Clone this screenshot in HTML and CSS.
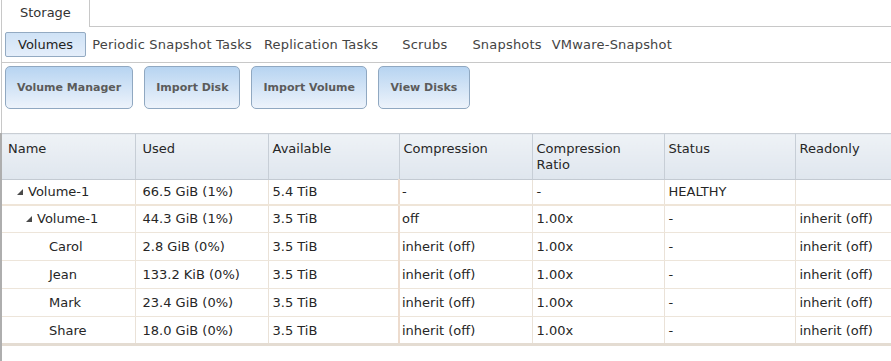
FILE: index.html
```html
<!DOCTYPE html>
<html lang="en">
<head>
  <meta charset="UTF-8" />
  <title>Storage</title>
  <meta name="viewport" content="width=device-width, initial-scale=1.0" />
  <link rel="stylesheet" href="styles.css">
</head>
<body>

  <div class="top">
    <div class="tabstrip">
      <div class="tab">Storage</div>
      <div class="tab-fill"></div>
    </div>

    <nav class="subnav">
      <a href="#" class="active">Volumes</a>
      <a href="#">Periodic Snapshot Tasks</a>
      <a href="#">Replication Tasks</a>
      <a href="#" class="wide">Scrubs</a>
      <a href="#">Snapshots</a>
      <a href="#" class="tight">VMware-Snapshot</a>
    </nav>

    <div class="toolbar">
      <button>Volume Manager</button>
      <button>Import Disk</button>
      <button>Import Volume</button>
      <button>View Disks</button>
    </div>
  </div>

  <div class="grid">
    <table>
      <colgroup>
        <col class="c-name"><col class="c-used"><col class="c-avail"><col class="c-comp">
        <col class="c-ratio"><col class="c-status"><col class="c-ro">
      </colgroup>
      <thead>
        <tr>
          <th>Name</th>
          <th>Used</th>
          <th>Available</th>
          <th>Compression</th>
          <th>Compression Ratio</th>
          <th>Status</th>
          <th>Readonly</th>
        </tr>
      </thead>
      <tbody>
        <tr class="pool">
          <td class="lvl0"><span class="twisty"><svg width="6" height="6" viewBox="0 0 6 6"><polygon points="6,0 6,6 0,6" fill="#4a4a4a"/></svg></span>Volume-1</td>
          <td>66.5 GiB (1%)</td>
          <td>5.4 TiB</td>
          <td class="split">-</td>
          <td>-</td>
          <td>HEALTHY</td>
          <td></td>
        </tr>
        <tr>
          <td class="lvl1"><span class="twisty"><svg width="6" height="6" viewBox="0 0 6 6"><polygon points="6,0 6,6 0,6" fill="#4a4a4a"/></svg></span>Volume-1</td>
          <td>44.3 GiB (1%)</td>
          <td>3.5 TiB</td>
          <td class="split">off</td>
          <td>1.00x</td>
          <td>-</td>
          <td>inherit (off)</td>
        </tr>
        <tr>
          <td class="lvl2">Carol</td>
          <td>2.8 GiB (0%)</td>
          <td>3.5 TiB</td>
          <td class="split">inherit (off)</td>
          <td>1.00x</td>
          <td>-</td>
          <td>inherit (off)</td>
        </tr>
        <tr>
          <td class="lvl2">Jean</td>
          <td>133.2 KiB (0%)</td>
          <td>3.5 TiB</td>
          <td class="split">inherit (off)</td>
          <td>1.00x</td>
          <td>-</td>
          <td>inherit (off)</td>
        </tr>
        <tr>
          <td class="lvl2">Mark</td>
          <td>23.4 GiB (0%)</td>
          <td>3.5 TiB</td>
          <td class="split">inherit (off)</td>
          <td>1.00x</td>
          <td>-</td>
          <td>inherit (off)</td>
        </tr>
        <tr class="last">
          <td class="lvl2">Share</td>
          <td>18.0 GiB (0%)</td>
          <td>3.5 TiB</td>
          <td class="split">inherit (off)</td>
          <td>1.00x</td>
          <td>-</td>
          <td>inherit (off)</td>
        </tr>
      </tbody>
    </table>
  </div>

</body>
</html>
```

FILE: styles.css
```css
:root {
  --font: 'DejaVu Sans', Verdana, sans-serif;
  --line: #c8c8c8;
  --text: #262626;
  --row-line: #ede5da;
}

* {
  margin: 0;
  padding: 0;
  box-sizing: border-box;
}

html, body {
  height: 100%;
  font-family: var(--font);
  font-size: 13px;
  color: var(--text);
  background: #fff;
  overflow: hidden;
}

body {
  display: flex;
  flex-direction: column;
}

.top {
  margin-left: 1px;
  border-left: 1px solid var(--line);
  padding-bottom: 24px;
}

/* tab strip */
.tabstrip {
  display: flex;
  height: 27px;
}

.tab {
  padding: 0 18px;
  width: 88px;
  line-height: 26px;
  border-right: 1px solid var(--line);
  color: #333;
}

.tab-fill {
  flex: 1;
  border-bottom: 1px solid var(--line);
}

/* sub navigation */
.subnav {
  display: flex;
  align-items: center;
  height: 36px;
  padding: 0 0 1px 3px;
  border-bottom: 1px solid var(--line);
}

.subnav a {
  color: #444;
  text-decoration: none;
  padding: 0 6px;
  line-height: 23px;
  letter-spacing: 0.2px;
  white-space: nowrap;
}

.subnav a.active {
  padding: 0 12px;
  letter-spacing: 0;
  border: 1px solid #93aac2;
  border-radius: 2px;
  background: linear-gradient(#cfe2f6, #e4eefa);
  color: #222;
}

.subnav a.wide {
  padding: 0 19px 0 18px;
}

.subnav a.tight {
  padding-left: 4px;
}

/* action buttons */
.toolbar {
  display: flex;
  gap: 11px;
  padding: 3px 0 0 3px;
}

.toolbar button {
  height: 43px;
  min-width: 92px;
  padding: 0 11px;
  font-family: var(--font);
  font-size: 11px;
  font-weight: bold;
  color: #5b5b5b;
  border: 1px solid #90a8c1;
  border-radius: 5px;
  background: linear-gradient(#b7d4f1, #edf3fb);
  cursor: pointer;
}

/* grid */
.grid {
  flex: 1;
  border-left: 2px solid #aeaeae;
  overflow: hidden;
}

table {
  width: 924px;
  table-layout: fixed;
  border-collapse: collapse;
}

.c-name { width: 133px; }
.c-used { width: 133px; }
.c-avail { width: 131px; }
.c-comp { width: 133px; }
.c-ratio { width: 132px; }
.c-status { width: 131px; }
.c-ro { width: 131px; }

th {
  height: 45px;
  padding: 7px 6px 6px 4px;
  text-align: left;
  vertical-align: top;
  font-weight: normal;
  line-height: 16px;
  color: var(--text);
  background: linear-gradient(#eef2f6, #dfe6ee);
  border-top: 1px solid #c9ced4;
  border-bottom: 1px solid #c3cad2;
  border-right: 1px solid #c7ced6;
}

th:first-child {
  padding-left: 6px;
}

th:nth-child(2),
td:nth-child(2) {
  padding-left: 7px;
}

td {
  height: 28px;
  padding: 0 6px 0 4px;
  white-space: nowrap;
  overflow: hidden;
  border-bottom: 1px solid var(--row-line);
  border-right: 1px solid #eae2d8;
}

td.split {
  padding-left: 2px;
  border-left: 2px solid #eddcce;
}

tr.pool td {
  height: 25px;
  border-bottom: 2px solid #efe5d8;
}

tr.last td {
  border-bottom: 3px solid #e4dcd2;
}

/* tree column */
.twisty {
  display: inline-block;
  width: 6px;
  height: 6px;
  margin-right: 5px;
  vertical-align: 1px;
}

.twisty svg {
  display: block;
}

td.lvl0 { padding-left: 15px; }
td.lvl1 { padding-left: 24px; }
td.lvl2 { padding-left: 47px; }
```
